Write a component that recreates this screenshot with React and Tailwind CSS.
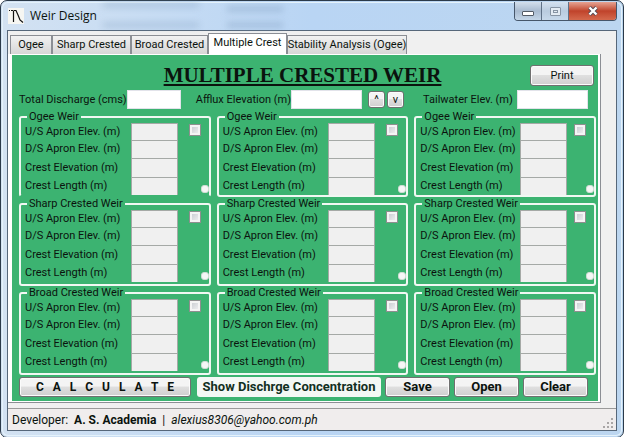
import React, { useState } from "react";
import clsx from "clsx";

const TABS = [
  { name: "Ogee", width: "w-[42px]" },
  { name: "Sharp Crested", width: "w-[79px]" },
  { name: "Broad Crested", width: "w-[77px]" },
  { name: "Multiple Crest", width: "w-[79px]" },
  { name: "Stability Analysis (Ogee)", width: "w-[120px]" },
];

const WEIR_TYPES = ["Ogee Weir", "Sharp Crested Weir", "Broad Crested Weir"];

const WEIR_FIELDS = [
  "U/S Apron Elev. (m)",
  "D/S Apron Elev. (m)",
  "Crest Elevation (m)",
  "Crest Length (m)",
];

function PushButton({ className, children, ...rest }) {
  return (
    <button
      type="button"
      className={clsx(
        "flex items-center justify-center whitespace-nowrap rounded-[3px] border border-[#707070] bg-linear-to-b from-[#f4f4f4] from-45% via-[#dfdfdf] via-50% to-[#cfcfcf] shadow-[inset_0_0_0_1px_#fbfbfb]",
        className
      )}
      {...rest}
    >
      {children}
    </button>
  );
}

function TitleBar() {
  return (
    <header className="relative flex h-7 items-start">
      <div className="absolute left-24 top-0 h-1.5 w-24 bg-[#7f9dbd]/30 blur-[3px]" />
      <div className="absolute left-24 top-5 h-1.5 w-24 bg-[#7f9dbd]/30 blur-[3px]" />
      <div className="absolute left-[220px] top-1 h-1.5 w-14 bg-[#7f9dbd]/40 blur-[3px]" />
      <div className="absolute left-[220px] top-5 h-1.5 w-14 bg-[#7f9dbd]/40 blur-[3px]" />
      <svg viewBox="0 0 16 16" className="relative ml-px mt-1.5 size-4 bg-[#f6f6f2]" aria-hidden="true">
        <path d="M1 2.5h1M3 2.5h2" stroke="#111" fill="none" />
        <path d="M5.500 14V3M5.500 2.500H8L10 7L12 12L15 14.500" stroke="#111" strokeWidth="1.200" fill="none" />
      </svg>
      <h1 className="relative ml-1.5 mt-1.5 font-['Open_Sans',sans-serif] text-[12px] leading-4">Weir Design</h1>
      <div className="relative ml-auto flex h-[19px] overflow-hidden rounded-b-[4px] border border-t-0 border-[#46566a]">
        <button type="button" aria-label="Minimize" className="flex w-[27px] items-center justify-center border-r border-[#5f7187] bg-linear-to-b from-[#d3dfec] via-[#a9bbd0] via-50% to-[#c4d6e8]">
          <span className="mt-1 h-[5px] w-3 rounded-[1px] border border-[#535b66] bg-white" />
        </button>
        <button type="button" aria-label="Maximize" className="flex w-[27px] items-center justify-center border-r border-[#5f7187] bg-linear-to-b from-[#d5e2f0] via-[#b9cbdf] via-50% to-[#c7d9eb]">
          <span className="flex h-[9px] w-[11px] items-center justify-center rounded-[1px] border border-[#8794a4] bg-[#e3ebf3]">
            <span className="h-[3px] w-[5px] border border-[#8794a4]" />
          </span>
        </button>
        <button type="button" aria-label="Close" className="flex w-[47px] items-center justify-center bg-linear-to-b from-[#e5a393] via-[#c0432b] via-50% to-[#d4694d]">
          <svg viewBox="0 0 12 10" className="h-2.5 w-3" aria-hidden="true">
            <path d="M2.500 1.500L9.500 8.500M9.500 1.500L2.500 8.500" stroke="#4f4a55" strokeWidth="4" />
            <path d="M2.500 1.500L9.500 8.500M9.500 1.500L2.500 8.500" stroke="#fff" strokeWidth="2.400" />
          </svg>
        </button>
      </div>
    </header>
  );
}

function TabStrip({ active, onSelect }) {
  return (
    <div role="tablist" className="flex h-[21px] items-end pl-0.5">
      {TABS.map(({ name, width }) => (
        <button
          key={name}
          type="button"
          role="tab"
          aria-selected={active === name}
          onClick={() => onSelect(name)}
          className={clsx(
            "flex items-center justify-center whitespace-nowrap border border-b-0 border-[#8b8e94]",
            width,
            active === name ? "h-[21px] bg-white pb-0.5" : "h-[19px] bg-linear-to-b from-[#f2f2f2] to-[#d6d6d6]"
          )}
        >
          {name}
        </button>
      ))}
    </div>
  );
}

function HeaderField({ id, label, inputWidth, className, children }) {
  return (
    <div className={clsx("flex items-center", className)}>
      <label htmlFor={id} className="flex-1 whitespace-nowrap">{label}</label>
      <input id={id} type="text" className={clsx("h-[19px] border border-[#e2e3ea] bg-white px-1 outline-none", inputWidth)} />
      {children}
    </div>
  );
}

function WeirGroup({ id, title, narrow, open }) {
  return (
    <fieldset
      className={clsx(
        "min-w-0 rounded-[3px] border-2 border-[#f1f8f3] pl-1",
        open && "border-b-transparent"
      )}
    >
      <legend className="ml-0.5 h-[13px] whitespace-nowrap px-0.5 leading-[13px]">{title}</legend>
      <div className="flex">
        <div className="grid flex-1 grid-rows-[17px_18px_19px_18px]">
          {WEIR_FIELDS.map((field, i) => (
            <div key={field} className="flex items-stretch">
              <label htmlFor={`${id}-${i}`} className="flex flex-1 items-center whitespace-nowrap">{field}</label>
              <input
                id={`${id}-${i}`}
                type="text"
                disabled
                className="w-[47px] rounded-[1px] border border-b-0 border-[#a5a9a6] bg-[#f0f0f0] px-1"
              />
            </div>
          ))}
        </div>
        <div className={clsx("flex flex-col items-end justify-between pb-0.5 pt-px", narrow ? "w-[27px]" : "w-[31px]")}>
          <input
            type="checkbox"
            aria-label={`Enable ${title}`}
            className="mr-2 size-3 appearance-none border border-[#8e8f8f] bg-linear-to-br from-[#c3c7cd] to-[#f6f6f6] shadow-[inset_0_0_0_2px_#f4f4f4]"
          />
          <button type="button" aria-label={`${title} details`} className="size-2 rounded-[3px] border border-[#cfdcd3] bg-[#f6f6f6]" />
        </div>
      </div>
    </fieldset>
  );
}

export default function App() {
  const [tab, setTab] = useState("Multiple Crest");

  return (
    <div className="bg-white font-[Roboto,'Liberation_Sans',sans-serif] text-[11px] leading-[14px] text-[#0b130e]">
      <div className="rounded-[7px] border border-[#2b3a4a] bg-linear-to-r from-[#d3e2f2] via-[#b9d5f4] via-50% to-[#bcd6f0] p-px">
        <div className="rounded-[6px] px-[5px] pb-[5px] shadow-[inset_0_0_0_1px_#e4f2fb]">
          <TitleBar />
          <main className="border border-[#56677a] bg-[#f0f0f0] pt-0.5">
            <TabStrip active={tab} onSelect={setTab} />
            <div className="mr-[15px] border-b border-r border-[#8b8e94] bg-white pb-px pl-1 pr-0.5 pt-px">
              <section className="bg-[#3cb371] pb-1 pl-[7px] pr-0.5 pt-1.5">
                <div className="flex items-start pr-0.5 pt-1">
                  <div className="w-14" />
                  <h2 className="flex-1 whitespace-nowrap text-center font-['Liberation_Serif',serif] text-[21px] font-bold leading-5 underline decoration-2 underline-offset-2">
                    MULTIPLE CRESTED WEIR
                  </h2>
                  <PushButton className="h-[21px] w-16">Print</PushButton>
                </div>

                <div className="mt-1 grid grid-cols-[160fr_208fr_170fr] gap-[15px] pr-2">
                  <HeaderField id="discharge" label="Total Discharge (cms)" inputWidth="w-[54px]" />
                  <HeaderField id="afflux" label="Afflux Elevation (m)" inputWidth="w-[71px]">
                    <PushButton aria-label="Raise" className="ml-1.5 h-[17px] w-[17px]">^</PushButton>
                    <PushButton aria-label="Lower" className="ml-0.5 h-[17px] w-[17px]">v</PushButton>
                  </HeaderField>
                  <HeaderField id="tailwater" label="Tailwater Elev. (m)" inputWidth="w-[71px]" className="pl-1" />
                </div>

                <div className="mt-px grid grid-cols-[192fr_192fr_182fr] grid-rows-[87px_89px_89px] gap-x-1.5">
                  {WEIR_TYPES.map((type, row) =>
                    [0, 1, 2].map((col) => (
                      <WeirGroup
                        key={`${row}-${col}`}
                        id={`weir-${row}-${col}`}
                        title={type}
                        narrow={col === 2}
                        open={row === 0 && col === 0}
                      />
                    ))
                  )}
                </div>

                <div className="mt-0.5 flex gap-1 pr-2 text-[13px] font-bold">
                  <PushButton className="mr-0.5 h-5 flex-1 whitespace-pre text-[12px]">C   A   L   C   U   L   A   T   E</PushButton>
                  <button type="button" className="h-5 w-[184px] whitespace-nowrap rounded-[3px] bg-[#f4f8f5] text-[#12301f]">
                    Show Dischrge Concentration
                  </button>
                  <PushButton className="h-5 w-[65px]">Save</PushButton>
                  <PushButton className="h-5 w-[65px]">Open</PushButton>
                  <PushButton className="h-5 w-[65px]">Clear</PushButton>
                </div>
              </section>
            </div>
            <footer className="mt-[5px] flex h-[22px] items-center border-t border-[#9a9a9a] bg-[#f0eded] pl-1 text-[12px]">
              <p className="whitespace-pre">
                Developer:  <strong>A. S. Academia</strong>  |  <em>alexius8306@yahoo.com.ph</em>
              </p>
              <svg viewBox="0 0 12 12" className="ml-auto mr-0.5 mt-1.5 size-3" fill="#a9a6a6" aria-hidden="true">
                <path d="M9 1h2v2H9zM5 5h2v2H5zM9 5h2v2H9zM1 9h2v2H1zM5 9h2v2H5zM9 9h2v2H9z" />
              </svg>
            </footer>
          </main>
        </div>
      </div>
    </div>
  );
}
